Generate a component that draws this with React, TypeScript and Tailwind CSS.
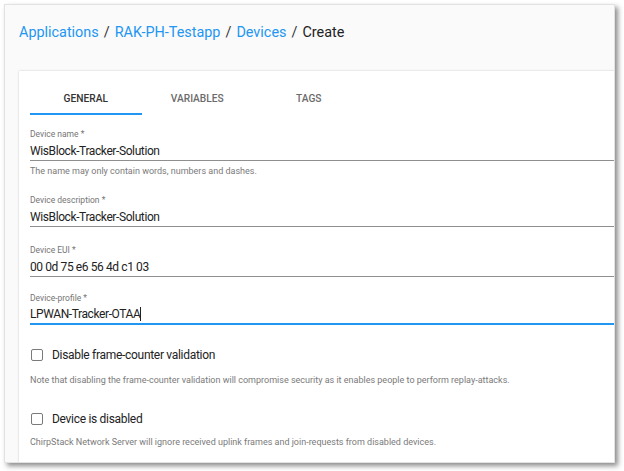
const fields = [
  { label: "Device name *", value: "WisBlock-Tracker-Solution", helper: "The name may only contain words, numbers and dashes." },
  { label: "Device description *", value: "WisBlock-Tracker-Solution" },
  { label: "Device EUI *", value: "00 0d 75 e6 56 4d c1 03" },
  { label: "Device-profile *", value: "LPWAN-Tracker-OTAA", focused: true },
];

const tabs = ["GENERAL", "VARIABLES", "TAGS"];

function Checkbox({ label, note, noteGap }: { label: string; note: string; noteGap: string }) {
  return (
    <div>
      <div className="flex items-center h-[24px]">
        <span className="w-[12px] h-[12px] border-[1.5px] border-[#7a7a7a] rounded-[2px] ml-[1px]" />
        <span className="ml-[9px] text-[12px] tracking-[-0.3px] text-[#222]">{label}</span>
      </div>
      <p className={`${noteGap} h-[12px] leading-[12px] text-[9px] text-[#7a7a7a]`}>{note}</p>
    </div>
  );
}

export default function App() {
  return (
    <div className="w-[624px] h-[471px] bg-white relative overflow-hidden" style={{ fontFamily: "Roboto, 'Liberation Sans', sans-serif" }}>
      <div className="ml-[4px] mt-[4px] w-[611px] h-[459px] bg-[#fafafa] border border-[#e2e2e2] shadow-[3px_3px_5px_rgba(0,0,0,0.45)] overflow-hidden">
        {/* breadcrumb */}
        <div className="pl-[14px] pt-[18px] h-[66px] text-[14.4px] leading-[20px]">
          <span className="text-[#2196f3]">Applications</span>
          <span className="text-[#333] mx-[5px]">/</span>
          <span className="text-[#2196f3]">RAK-PH-Testapp</span>
          <span className="text-[#333] mx-[5px]">/</span>
          <span className="text-[#2196f3]">Devices</span>
          <span className="text-[#333] mx-[5px]">/</span>
          <span className="text-[#222]">Create</span>
        </div>

        {/* card */}
        <div className="ml-[14px] w-[640px] h-[400px] bg-white shadow-[0_0_2px_rgba(0,0,0,0.2)] px-[11px] pt-[8px]">
          <div className="flex h-[36px]">
            {tabs.map((t, i) => (
              <div key={t} className="w-[111.5px] flex flex-col">
                <div className={`flex-1 flex items-center justify-center pt-[5px] text-[10.2px] font-medium ${i === 0 ? "text-[#333]" : "text-[#6b6b6b]"}`}>
                  {t}
                </div>
                <div className={`h-[2px] ${i === 0 ? "bg-[#2196f3]" : ""}`} />
              </div>
            ))}
          </div>

          {fields.map((f, i) => (
            <div key={f.label} className={i === 0 ? "mt-[13px]" : i === 3 ? "mt-[15px]" : "mt-[17px]"}>
              <div className="h-[13px] leading-[13px] text-[8.5px] text-[#757575]">{f.label}</div>
              <div className={`h-[20px] flex items-center text-[12px] tracking-[-0.4px] text-[#222] ${f.focused ? "border-b-2 border-[#2196f3]" : "border-b border-[#8f8f8f]"}`}>
                {f.value}
                {f.focused && <span className="w-px h-[14px] bg-[#222]" />}
              </div>
              {f.helper && (
                <p className="mt-[4px] h-[12px] leading-[12px] text-[9px] text-[#7a7a7a]">{f.helper}</p>
              )}
            </div>
          ))}

          <div className="mt-[18px]">
            <Checkbox
              label="Disable frame-counter validation"
              note="Note that disabling the frame-counter validation will compromise security as it enables people to perform replay-attacks."
              noteGap="mt-[7px]"
            />
          </div>
          <div className="mt-[21px]">
            <Checkbox
              label="Device is disabled"
              note="ChirpStack Network Server will ignore received uplink frames and join-requests from disabled devices."
              noteGap="mt-[5px]"
            />
          </div>
        </div>
      </div>
    </div>
  );
}
